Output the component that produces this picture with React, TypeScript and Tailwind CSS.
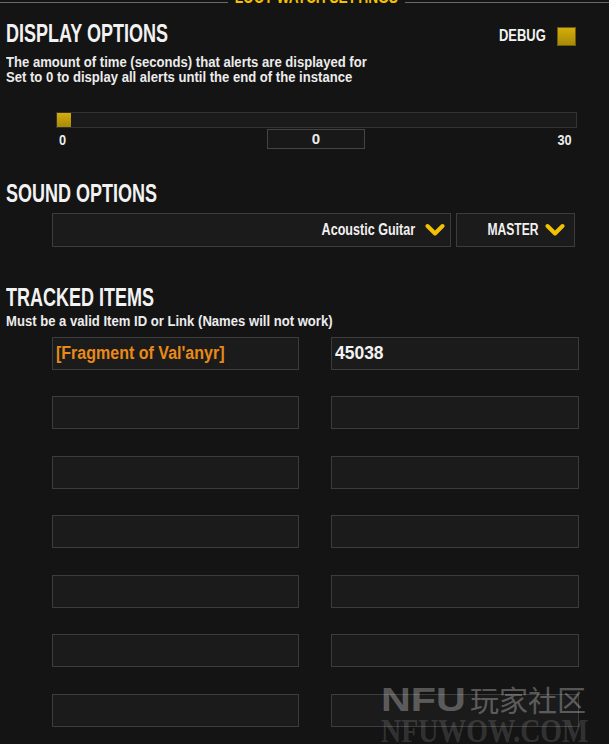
import React from "react";

const FONT = "font-['Liberation_Sans','Arial',sans-serif]";

// condensed text: the game font is narrow, so squeeze Liberation Sans horizontally
function N({ children, className = "", right = false }: { children: React.ReactNode; className?: string; right?: boolean }) {
  return (
    <span className={`inline-block whitespace-nowrap ${right ? "origin-right" : "origin-left"} ${className}`}>
      {children}
    </span>
  );
}

function Chevron() {
  return (
    <svg width="20" height="14" viewBox="0 0 20 14" className="shrink-0">
      <path d="M2.5 3 L10 10.5 L17.5 3" fill="none" stroke="#f2c200" strokeWidth="4" strokeLinecap="round" strokeLinejoin="round" />
    </svg>
  );
}

function Heading({ children }: { children: React.ReactNode }) {
  return (
    <h2 className="h-[25px] text-[25px] leading-[25px] font-bold text-[#f2f2f2]">
      <N className="scale-x-[0.72]">{children}</N>
    </h2>
  );
}

const ROWS = [
  { name: "[Fragment of Val'anyr]", id: "45038" },
  { name: "", id: "" },
  { name: "", id: "" },
  { name: "", id: "" },
  { name: "", id: "" },
  { name: "", id: "" },
  { name: "", id: "" },
];

export default function App() {
  return (
    <div className={`relative w-[609px] h-[744px] overflow-hidden bg-[#141414] ${FONT}`}>
      {/* Frame title */}
      <div className="flex items-center h-[5px]">
        <span className="w-[228px] h-px bg-[#6a6a6a]" />
        <span className="w-[177px] flex justify-center text-[19px] font-bold text-[#f2c200] leading-none -mt-[12px]">
          <span className="inline-block whitespace-nowrap scale-x-[0.72]">LOOT WATCH SETTINGS</span>
        </span>
        <span className="flex-1 h-px bg-[#6a6a6a]" />
      </div>

      <div className="px-[6px]">
        {/* Display options */}
        <div className="flex items-start justify-between pt-[16px]">
          <Heading>DISPLAY OPTIONS</Heading>
          <div className="flex items-center pr-[27px] pt-[3px]">
            <span className="w-[58px] text-[16px] font-bold text-[#f2f2f2]">
              <N className="scale-x-[0.81]">DEBUG</N>
            </span>
            <span className="w-[19px] h-[19px] bg-gradient-to-b from-[#d4ad0a] to-[#a88a08] border border-[#6e5c0a]" />
          </div>
        </div>
        <p className="mt-[7px] text-[14px] leading-[15px] font-bold text-[#ececec]">
          <N className="scale-x-[0.935]">The amount of time (seconds) that alerts are displayed for</N>
          <br />
          <N className="scale-x-[0.935]">Set to 0 to display all alerts until the end of the instance</N>
        </p>

        {/* Slider */}
        <div className="ml-[50px] mr-[26px] mt-[27px]">
          <div className="h-[16px] bg-[#1b1b1b] border border-[#333] flex">
            <span className="w-[14px] h-full bg-gradient-to-b from-[#d4ad0a] to-[#a88a08]" />
          </div>
          <div className="flex items-start justify-between text-[15px] font-bold text-[#ececec] pl-[3px] pr-[5px]">
            <span className="pt-[1px]">
              <N className="scale-x-[0.85]">0</N>
            </span>
            <div className="w-[98px] h-[20px] mt-[1px] border border-[#444] bg-[#181818] flex items-center justify-center ml-[9px]">0</div>
            <span className="pt-[1px]">
              <N right className="scale-x-[0.85]">30</N>
            </span>
          </div>
        </div>

        {/* Sound options */}
        <div className="mt-[29px]">
          <Heading>SOUND OPTIONS</Heading>
        </div>
        <div className="flex gap-[5px] ml-[46px] mt-[7px]">
          <div className="w-[399px] h-[34px] bg-[#1b1b1b] border border-[#3c3c3c] flex items-center justify-end gap-[10px] pr-[5px]">
            <span className="text-[16px] font-bold text-[#f0f0f0]">
              <N right className="scale-x-[0.785]">Acoustic Guitar</N>
            </span>
            <Chevron />
          </div>
          <div className="w-[119px] h-[34px] bg-[#1b1b1b] border border-[#3c3c3c] flex items-center justify-end gap-[6px] pr-[9px]">
            <span className="text-[16px] font-bold text-[#f0f0f0]">
              <N right className="scale-x-[0.756]">MASTER</N>
            </span>
            <Chevron />
          </div>
        </div>

        {/* Tracked items */}
        <div className="mt-[38px]">
          <Heading>TRACKED ITEMS</Heading>
        </div>
        <p className="mt-[3px] text-[14px] leading-[16px] font-bold text-[#ececec]">
          <N className="scale-x-[0.935]">Must be a valid Item ID or Link (Names will not work)</N>
        </p>

        <div className="flex flex-col gap-[26.5px] ml-[46px] mt-[8px]">
          {ROWS.map((r, i) => (
            <div key={i} className="flex gap-[32px]">
              <div className="w-[247px] h-[33px] bg-[#1b1b1b] border border-[#3c3c3c] flex items-center px-[3px]">
                <span className="text-[18px] font-bold text-[#e98a17]">
                  <N className="scale-x-[0.89]">{r.name}</N>
                </span>
              </div>
              <div className="w-[248px] h-[33px] bg-[#1b1b1b] border border-[#3c3c3c] flex items-center px-[3px]">
                <span className="text-[18px] font-bold text-[#f2f2f2]">
                  <N className="scale-x-[0.97]">{r.id}</N>
                </span>
              </div>
            </div>
          ))}
        </div>
      </div>

      {/* Watermark */}
      <div className="absolute left-[381px] top-[682px] flex flex-col pointer-events-none">
        <div className="flex items-center h-[34px] text-white/30">
          <span className="w-[89px] text-[33px] font-bold leading-none">
            <N className="scale-x-[1.25]">NFU</N>
          </span>
          <span className="text-[29px] font-['Noto_Sans_CJK_SC',sans-serif] leading-none">玩家社区</span>
        </div>
        <span className="h-[28px] text-[34px] font-bold font-['Liberation_Serif',serif] leading-[30px] text-white/15">
          <N className="scale-x-[0.82]">NFUWOW.COM</N>
        </span>
      </div>
    </div>
  );
}
